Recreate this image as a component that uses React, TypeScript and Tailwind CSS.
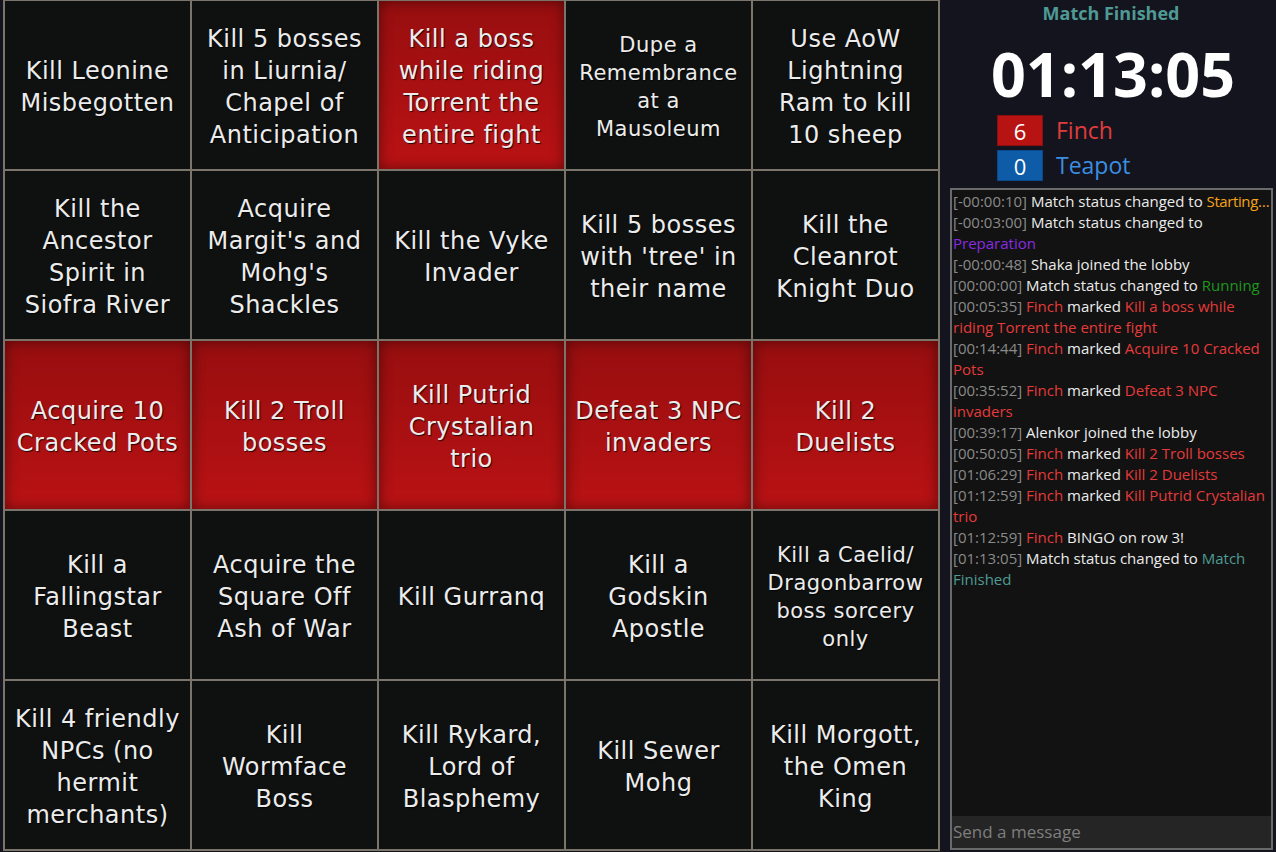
import React from "react";

type Cell = { lines: string[]; red?: boolean; small?: boolean };

const cells: Cell[] = [
  { lines: ["Kill Leonine", "Misbegotten"] },
  { lines: ["Kill 5 bosses", "in Liurnia/", "Chapel of", "Anticipation"] },
  { lines: ["Kill a boss", "while riding", "Torrent the", "entire fight"], red: true },
  { lines: ["Dupe a", "Remembrance", "at a", "Mausoleum"], small: true },
  { lines: ["Use AoW", "Lightning", "Ram to kill", "10 sheep"] },
  { lines: ["Kill the", "Ancestor", "Spirit in", "Siofra River"] },
  { lines: ["Acquire", "Margit's and", "Mohg's", "Shackles"] },
  { lines: ["Kill the Vyke", "Invader"] },
  { lines: ["Kill 5 bosses", "with 'tree' in", "their name"] },
  { lines: ["Kill the", "Cleanrot", "Knight Duo"] },
  { lines: ["Acquire 10", "Cracked Pots"], red: true },
  { lines: ["Kill 2 Troll", "bosses"], red: true },
  { lines: ["Kill Putrid", "Crystalian", "trio"], red: true },
  { lines: ["Defeat 3 NPC", "invaders"], red: true },
  { lines: ["Kill 2", "Duelists"], red: true },
  { lines: ["Kill a", "Fallingstar", "Beast"] },
  { lines: ["Acquire the", "Square Off", "Ash of War"] },
  { lines: ["Kill Gurranq"] },
  { lines: ["Kill a", "Godskin", "Apostle"] },
  { lines: ["Kill a Caelid/", "Dragonbarrow", "boss sorcery", "only"], small: true },
  { lines: ["Kill 4 friendly", "NPCs (no", "hermit", "merchants)"] },
  { lines: ["Kill", "Wormface", "Boss"] },
  { lines: ["Kill Rykard,", "Lord of", "Blasphemy"] },
  { lines: ["Kill Sewer", "Mohg"] },
  { lines: ["Kill Morgott,", "the Omen", "King"] },
];

type Seg = { t: string; c: "ts" | "w" | "o" | "p" | "g" | "r" | "teal" };
const log: Seg[][] = [
  [{ t: "[-00:00:10] ", c: "ts" }, { t: "Match status changed to ", c: "w" }, { t: "Starting…", c: "o" }],
  [{ t: "[-00:03:00] ", c: "ts" }, { t: "Match status changed to", c: "w" }],
  [{ t: "Preparation", c: "p" }],
  [{ t: "[-00:00:48] ", c: "ts" }, { t: "Shaka joined the lobby", c: "w" }],
  [{ t: "[00:00:00] ", c: "ts" }, { t: "Match status changed to ", c: "w" }, { t: "Running", c: "g" }],
  [{ t: "[00:05:35] ", c: "ts" }, { t: "Finch", c: "r" }, { t: " marked ", c: "w" }, { t: "Kill a boss while", c: "r" }],
  [{ t: "riding Torrent the entire fight", c: "r" }],
  [{ t: "[00:14:44] ", c: "ts" }, { t: "Finch", c: "r" }, { t: " marked ", c: "w" }, { t: "Acquire 10 Cracked", c: "r" }],
  [{ t: "Pots", c: "r" }],
  [{ t: "[00:35:52] ", c: "ts" }, { t: "Finch", c: "r" }, { t: " marked ", c: "w" }, { t: "Defeat 3 NPC", c: "r" }],
  [{ t: "invaders", c: "r" }],
  [{ t: "[00:39:17] ", c: "ts" }, { t: "Alenkor joined the lobby", c: "w" }],
  [{ t: "[00:50:05] ", c: "ts" }, { t: "Finch", c: "r" }, { t: " marked ", c: "w" }, { t: "Kill 2 Troll bosses", c: "r" }],
  [{ t: "[01:06:29] ", c: "ts" }, { t: "Finch", c: "r" }, { t: " marked ", c: "w" }, { t: "Kill 2 Duelists", c: "r" }],
  [{ t: "[01:12:59] ", c: "ts" }, { t: "Finch", c: "r" }, { t: " marked ", c: "w" }, { t: "Kill Putrid Crystalian", c: "r" }],
  [{ t: "trio", c: "r" }],
  [{ t: "[01:12:59] ", c: "ts" }, { t: "Finch", c: "r" }, { t: " BINGO on row 3!", c: "w" }],
  [{ t: "[01:13:05] ", c: "ts" }, { t: "Match status changed to ", c: "w" }, { t: "Match", c: "teal" }],
  [{ t: "Finished", c: "teal" }],
];

const colorClass: Record<Seg["c"], string> = {
  ts: "text-[#8a8a8a]",
  w: "text-[#ececec]",
  o: "text-[#f5a31a] tracking-[-0.4px]",
  p: "text-[#8a2be2]",
  g: "text-[#1f961f]",
  r: "text-[#e53a3a]",
  teal: "text-[#4f9a94]",
};

export default function App() {
  return (
    <div className="flex w-[1276px] h-[852px] bg-[#14141e] overflow-hidden">
      <div className="ml-[3px] -mt-px w-[937px] h-[852px] shrink-0 grid grid-cols-5 grid-rows-[repeat(5,168px)] gap-[2px] p-[2px] bg-[#7b746a]">
        {cells.map((cell, i) => (
          <div
            key={i}
            className={
              "flex flex-col items-center justify-center pt-[4px] text-center text-[#ececec] [text-shadow:1px_1px_1px_rgba(0,0,0,0.8)] " +
              (cell.red
                ? "bg-gradient-to-b from-[#970e0f] to-[#ba1214] shadow-[inset_0_0_14px_rgba(0,0,0,0.45)]"
                : "bg-[#0f1111]")
            }
            style={{ fontFamily: '"DejaVu Sans", Verdana, sans-serif' }}
          >
            {cell.lines.map((l, j) => (
              <div
                key={j}
                className={
                  "whitespace-nowrap " +
                  (cell.small
                    ? "text-[21px] leading-[28px] tracking-[0.5px]"
                    : "text-[24px] leading-[32px] tracking-[0.5px]")
                }
              >
                {l}
              </div>
            ))}
          </div>
        ))}
      </div>
      <div
        className="flex-1 flex flex-col min-w-0"
        style={{ fontFamily: '"Open Sans", "Noto Sans", sans-serif' }}
      >
        <div className="pt-[1px] pl-[6px] text-center text-[18px] leading-[24px] font-bold text-[#4f9a94]">
          Match Finished
        </div>
        <div className="mt-[16px] pl-[10px] text-center text-[61px] leading-[66px] font-bold text-white">
          01:13:05
        </div>
        <div className="ml-[57px] mt-[8px] flex flex-col gap-[4px]">
          <div className="flex items-center">
            <div className="w-[46px] h-[31px] bg-[#b81313] border border-[#8a0e0e] flex items-center justify-center text-white text-[22px] leading-none">
              6
            </div>
            <div className="ml-[13px] text-[23px] leading-none text-[#e03c3c]">Finch</div>
          </div>
          <div className="flex items-center">
            <div className="w-[46px] h-[31px] bg-[#0e5ba8] border border-[#0b4a8a] flex items-center justify-center text-white text-[22px] leading-none">
              0
            </div>
            <div className="ml-[13px] text-[23px] leading-none text-[#3b8ee0]">Teapot</div>
          </div>
        </div>
        <div className="ml-[10px] mr-[3px] mt-[7px] mb-[2px] flex-1 flex flex-col border-2 border-[#6a6a6a] bg-[#121212] min-h-0">
          <div className="flex-1 pt-[1px] pl-[1px] text-[15px] leading-[21px] overflow-hidden">
            {log.map((line, i) => (
              <div key={i} className="whitespace-nowrap overflow-hidden">
                {line.map((s, j) => (
                  <span key={j} className={colorClass[s.c]}>
                    {s.t}
                  </span>
                ))}
              </div>
            ))}
          </div>
          <div className="h-[32px] bg-[#252525] flex items-center pl-[1px] text-[17px] text-[#7e7e7e]">
            Send a message
          </div>
        </div>
      </div>
    </div>
  );
}
